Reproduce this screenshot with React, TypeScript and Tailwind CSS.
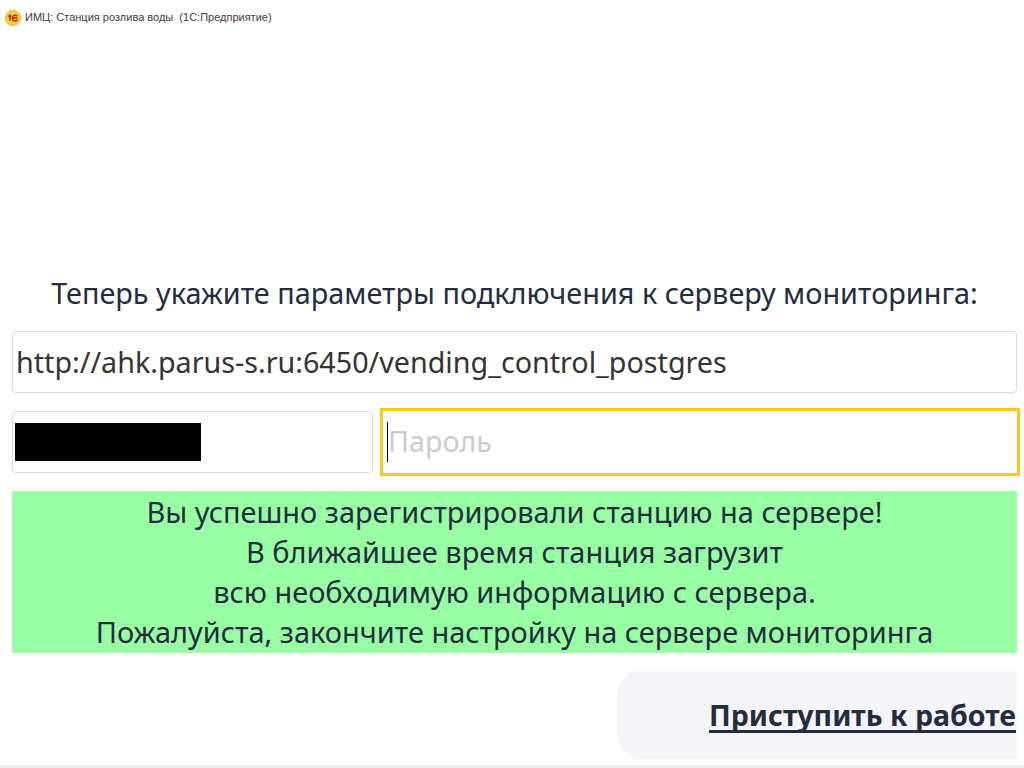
export default function App() {
  const f = { fontFamily: '"Noto Sans", sans-serif' };
  return (
    <div className="w-[1024px] h-[768px] bg-white flex flex-col overflow-hidden relative text-[#242c40]" style={f}>
      <div className="h-[35px] flex items-start pt-[10px] pl-[5px] gap-[4px] text-[#3c3c3c] text-[11px] leading-[15px] shrink-0 font-['Liberation_Sans',sans-serif]">
        <svg width="16" height="16" viewBox="0 0 16 16" className="shrink-0">
          <circle cx="8" cy="8" r="7.5" fill="#f6d33c" stroke="#e2b020" />
          <path d="M3.2 6.6 L5 5.2 V10.8 M12.6 6.4 A3 2.9 0 1 0 12.6 9.8 M7.2 8.1 H12.6" fill="none" stroke="#c0231c" strokeWidth="1.5" />
        </svg>
        <span className="whitespace-pre">ИМЦ: Станция розлива воды  (1С:Предприятие)</span>
      </div>
      <div className="h-[242px] shrink-0" />
      <div className="ml-[12px] w-[1005px] text-center text-[28.85px] leading-[32px] h-[54px] shrink-0 text-[#242c40] whitespace-nowrap">
        Теперь укажите параметры подключения к серверу мониторинга:
      </div>
      <div className="pl-[12px] shrink-0">
        <div className="h-[62px] w-[1005px] border border-[#d9d9d9] rounded-[4px] flex items-center pl-[3px] text-[28.7px] text-[#333]">
          http://ahk.parus-s.ru:6450/vending_control_postgres
        </div>
      </div>
      <div className="flex items-center pl-[12px] mt-[18px] h-[62px] shrink-0">
        <div className="w-[361px] h-[62px] border border-[#d9d9d9] rounded-[4px] flex items-center pl-[2px]">
          <div className="w-[186px] h-[38px] bg-black" />
        </div>
        <div className="ml-[7px] w-[640px] h-[68px] border-[3px] border-[#f9c91c] flex items-center pl-[4px] shrink-0">
          <div className="w-px h-[40px] bg-black" />
          <span className="text-[28.7px] text-[#cccccc] -mt-[2px]">Пароль</span>
        </div>
      </div>
      <div className="ml-[12px] w-[1005px] h-[162px] mt-[18px] bg-[#99ffa4] text-center text-[28.95px] leading-[40px] text-[#242c40] pt-[1px] shrink-0 whitespace-nowrap">
        <div>Вы успешно зарегистрировали станцию на сервере!</div>
        <div>В ближайшее время станция загрузит</div>
        <div>всю необходимую информацию с сервера.</div>
        <div>Пожалуйста, закончите настройку на сервере мониторинга</div>
      </div>
      <div className="ml-[617px] w-[400px] h-[88px] mt-[18px] bg-[#f4f4f9] rounded-l-[24px] flex items-center justify-end shrink-0">
        <span className="text-[28.5px] font-bold underline decoration-[3px] underline-offset-[4px] [text-decoration-skip-ink:none] text-[#242c40] pr-[1px]">Приступить к работе</span>
      </div>
      <div className="absolute left-0 right-0 bottom-0 h-[3px] bg-[#eeeeee]" />
    </div>
  );
}
